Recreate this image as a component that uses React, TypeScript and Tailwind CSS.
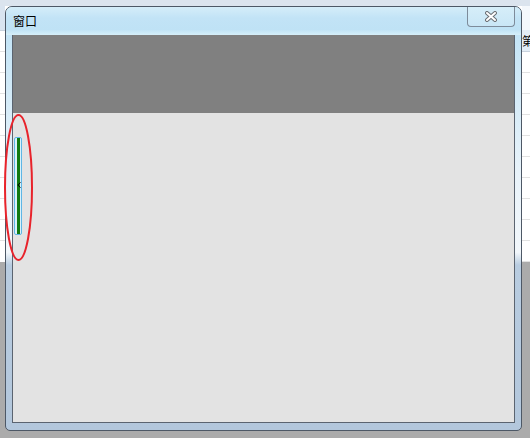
export default function App() {
  const rows = Array.from({ length: 10 });
  return (
    <div className="relative w-[530px] h-[438px] overflow-hidden bg-[#ababab] font-['Noto_Sans_CJK_SC',sans-serif]">
      {/* desktop background */}
      <div className="flex flex-col h-full">
        <div className="h-[6px] shrink-0 bg-[#dbe4ee]" />
        <div className="flex h-[256px] shrink-0 bg-white overflow-hidden">
          <div className="w-[5px] flex flex-col">
            <div className="h-[25px] shrink-0 bg-[#d9e4f0] border-b border-[#c9d3de]" />
            {rows.map((_, i) => (
              <div key={i} className="h-[21px] shrink-0 border-b border-[#e2e2e2]" />
            ))}
          </div>
          <div className="flex-1" />
          <div className="w-[8px] flex flex-col">
            <div className="h-[24px] shrink-0 bg-[#f4f8fc]" />
            <div className="h-[22px] shrink-0 bg-[#e4edf6] border-b border-[#c9d3de] text-[12px] leading-[22px] text-black whitespace-nowrap overflow-hidden">
              第
            </div>
            {rows.map((_, i) => (
              <div key={i} className="h-[21px] shrink-0 border-b border-[#e2e2e2]" />
            ))}
          </div>
        </div>
        <div className="flex-1 bg-[#ababab]" />
      </div>

      {/* window */}
      <div className="absolute left-[5px] top-[6px] w-[517px] h-[425px] flex flex-col border border-[#4d5866] rounded-t-[7px] rounded-b-[5px] overflow-hidden bg-[linear-gradient(to_bottom,#cfeaf8_0%,#c3e4f6_6%,#e9f3fa_40%,#f2f7fb_58%,#b8cce0_61%,#b3c7dc_100%)]">
        {/* title bar */}
        <div className="h-[28px] shrink-0 flex items-start bg-[linear-gradient(to_bottom,#d4edf9_0%,#c2e3f6_40%,#bfe2f5_80%,#d6eff9_100%)]">
          <div className="pl-[7px] pt-[6px] text-[12px] leading-[16px] text-black">窗口</div>
          <div className="ml-auto mr-[6px] w-[48px] h-[20px] border border-t-0 border-[#7d8b9a] rounded-b-[4px] bg-[linear-gradient(to_bottom,#d6eef9,#c9e6f6)] flex items-center justify-center">
            <svg width="14" height="11" viewBox="0 0 14 11">
              <path d="M3 2 L11 9 M11 2 L3 9" stroke="#6b6f74" strokeWidth="4" strokeLinecap="round" fill="none" />
              <path d="M3 2 L11 9 M11 2 L3 9" stroke="#ffffff" strokeWidth="2" strokeLinecap="round" fill="none" />
            </svg>
          </div>
        </div>
        {/* body */}
        <div className="flex-1 flex px-[6px] pb-[7px]">
          <div className="flex-1 flex flex-col border border-t-0 border-[#5b6470] bg-[#e3e3e3]">
            <div className="h-[78px] shrink-0 bg-[#808080]" />
            <div className="flex-1 pl-[1px] pt-[24px]">
              <div className="relative w-[8px] h-[98px] rounded-[2px] border border-[#5fb6e6] bg-[#d9f1fb] flex justify-center">
                <div className="w-[3px] h-full bg-[#117a11]" />
                <svg className="absolute left-[2px] top-[44px]" width="4" height="6" viewBox="0 0 4 6">
                  <path d="M3.5 0.5 L0.8 3 L3.5 5.5" stroke="#000" strokeWidth="1" fill="none" />
                </svg>
              </div>
            </div>
          </div>
        </div>
      </div>

      {/* annotation ellipse */}
      <svg className="absolute left-0 top-0 pointer-events-none" width="530" height="438">
        <ellipse cx="18.5" cy="187.5" rx="13.5" ry="72.5" fill="none" stroke="#e8232b" strokeWidth="2" />
      </svg>
    </div>
  );
}
